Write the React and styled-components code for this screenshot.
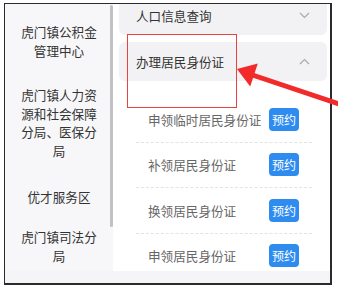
import React from "react";
import styled, { createGlobalStyle } from "styled-components";

const Global = createGlobalStyle`
  html, body {
    margin: 0;
    padding: 0;
    background: #fff;
  }
  body {
    font-family: "Noto Sans CJK SC", "Noto Sans", sans-serif;
  }
`;

const Page = styled.div`
  position: relative;
  width: 338px;
  height: 291px;
  padding: 3px 0 0 4px;
  box-sizing: border-box;
  overflow: hidden;
`;

const Frame = styled.div`
  width: 328px;
  height: 282px;
  box-sizing: border-box;
  border: 1px solid #2b2b2b;
  border-right-width: 2px;
  border-bottom-width: 2px;
  display: flex;
  flex-direction: column;
  overflow: hidden;
  background: #f6f6f8;
`;

const Main = styled.div`
  display: flex;
  height: 267px;
  overflow: hidden;
`;

const Sidebar = styled.div`
  position: relative;
  width: 108px;
  flex-shrink: 0;
  padding-top: 6px;
  background: #f7f7f9;
  box-sizing: border-box;
`;

const SideItem = styled.div`
  padding: ${(p) => p.$pad || "13px 12px"};
  text-align: center;
  font-size: 12.6px;
  line-height: 18.5px;
  color: #333;
`;

const Scrollbar = styled.div`
  position: absolute;
  right: 0;
  top: 1px;
  width: 3px;
  height: 222px;
  border-radius: 2px;
  background: #c2c2c4;
`;

const Panel = styled.div`
  flex: 1;
  background: #fff;
  padding: 0 3px 0 6px;
  overflow: hidden;
`;

const List = styled.div`
  margin-top: -8px;
  display: flex;
  flex-direction: column;
  gap: 7px;
`;

const Header = styled.div`
  height: 39px;
  display: flex;
  align-items: center;
  justify-content: space-between;
  padding: 0 17px 0 17px;
  border-radius: 6px;
  background: #f2f2f4;
  font-size: 12.6px;
  color: #333;
`;

const Chevron = ({ up }) => (
  <svg width="11" height="7" viewBox="0 0 11 7">
    <path
      d={up ? "M1 6 L5.5 1.5 L10 6" : "M1 1 L5.5 5.5 L10 1"}
      fill="none"
      stroke="#a9a9ad"
      strokeWidth="1.2"
    />
  </svg>
);

const SubList = styled.div`
  margin-top: 16px;
`;

const Row = styled.div`
  height: 45.5px;
  margin: 0 15px 0 17px;
  padding: 0 13px 0 12px;
  display: flex;
  align-items: center;
  justify-content: space-between;
  border-bottom: 1px dashed #e3e3e6;
  box-sizing: border-box;
  font-size: 12.6px;
  color: #666;
`;

const Book = styled.span`
  width: 30px;
  height: 23px;
  border-radius: 4px;
  background: #2e8cf0;
  color: #fff;
  font-size: 12px;
  display: flex;
  align-items: center;
  justify-content: center;
  flex-shrink: 0;
`;

const Footer = styled.div`
  flex: 1;
  background: #f5f5f7;
`;

const Highlight = styled.div`
  position: absolute;
  left: 127px;
  top: 34px;
  width: 110px;
  height: 74px;
  box-sizing: border-box;
  border: 1.5px solid #e8433f;
  pointer-events: none;
`;

const Arrow = styled.svg`
  position: absolute;
  left: 0;
  top: 0;
  pointer-events: none;
`;

const sideItems = [
  { text: "虎门镇公积金管理中心" },
  { text: "虎门镇人力资源和社会保障分局、医保分局" },
  { text: "优才服务区", pad: "15px 12px 8.5px" },
  { text: "虎门镇司法分局" },
];

const services = ["申领临时居民身份证", "补领居民身份证", "换领居民身份证", "申领居民身份证"];

export default function App() {
  return (
    <>
      <Global />
      <Page>
        <Frame>
          <Main>
            <Sidebar>
              {sideItems.map((s) => (
                <SideItem key={s.text} $pad={s.pad}>
                  {s.text}
                </SideItem>
              ))}
              <Scrollbar />
            </Sidebar>
            <Panel>
              <List>
                <Header>
                  <span>人口信息查询</span>
                  <Chevron />
                </Header>
                <div>
                  <Header>
                    <span>办理居民身份证</span>
                    <Chevron up />
                  </Header>
                  <SubList>
                    {services.map((s, i) => (
                      <Row key={i}>
                        <span>{s}</span>
                        <Book>预约</Book>
                      </Row>
                    ))}
                  </SubList>
                </div>
              </List>
            </Panel>
          </Main>
          <Footer />
        </Frame>
        <Highlight />
        <Arrow width="338" height="291" viewBox="0 0 338 291">
          <line x1="251" y1="74.5" x2="345" y2="106" stroke="#f22a2a" strokeWidth="5" />
          <polygon points="237,69 257.8,63.6 250.2,86.4" fill="#f22a2a" />
        </Arrow>
      </Page>
    </>
  );
}
